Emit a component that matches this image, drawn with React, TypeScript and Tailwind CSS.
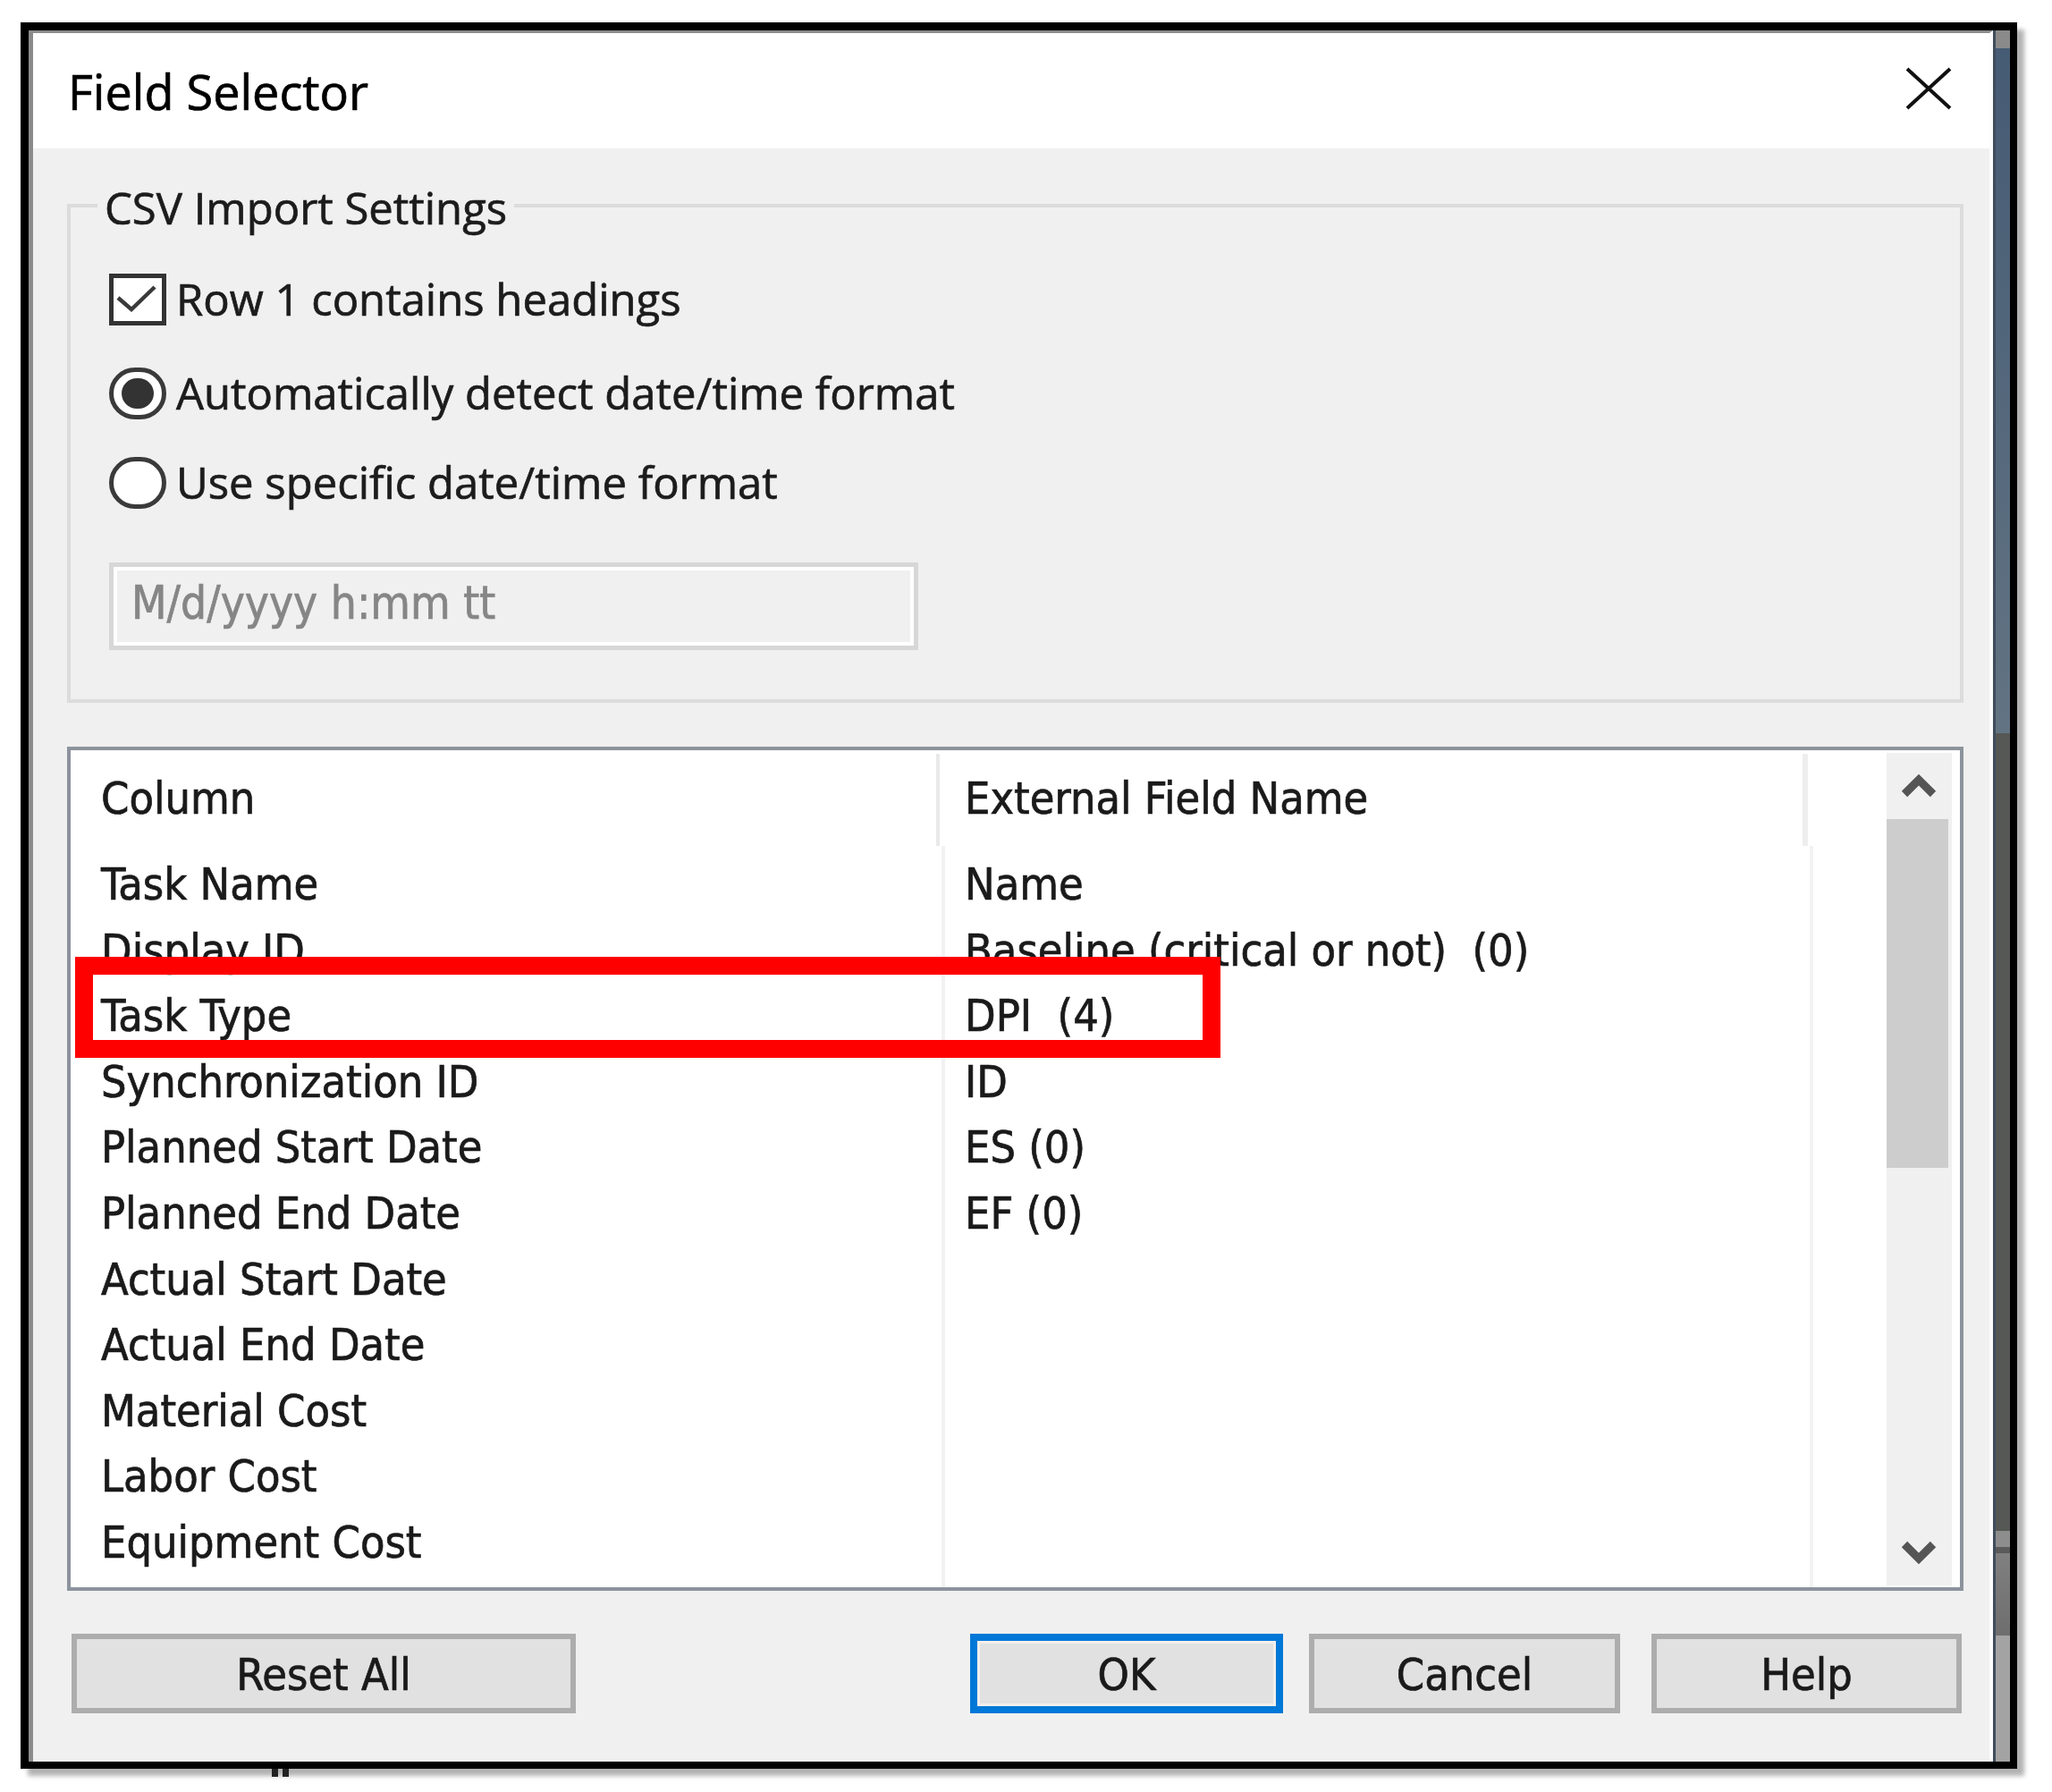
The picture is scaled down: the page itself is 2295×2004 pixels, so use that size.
const ui = "font-['Open_Sans','Noto_Sans',sans-serif] [-webkit-text-stroke:0.7px_currentcolor]";
const tahoma =
  "font-['DejaVu_Sans_Condensed','DejaVu_Sans',sans-serif] font-stretch-condensed [-webkit-text-stroke:0.7px_currentcolor]";

const rows: [string, string][] = [
  ['Task Name', 'Name'],
  ['Display ID', 'Baseline (critical or not)  (0)'],
  ['Task Type', 'DPI  (4)'],
  ['Synchronization ID', 'ID'],
  ['Planned Start Date', 'ES (0)'],
  ['Planned End Date', 'EF (0)'],
  ['Actual Start Date', ''],
  ['Actual End Date', ''],
  ['Material Cost', ''],
  ['Labor Cost', ''],
  ['Equipment Cost', ''],
  ['', ''],
];

const TitleBar = () => (
  <div className="flex h-[129px] shrink-0 items-center justify-between bg-white pr-[42px] pl-[39px]">
    <span className={`${ui} text-[54px] leading-none text-black`}>Field Selector</span>
    <svg width="52" height="48" viewBox="0 0 52 48" className="mb-[6px]">
      <path d="M2 2 L50 46 M50 2 L2 46" stroke="#111" strokeWidth="4" fill="none" />
    </svg>
  </div>
);

const Checkbox = () => (
  <div className="h-[58px] w-[64px] shrink-0 border-[5px] border-[#333] bg-white">
    <svg width="54" height="48" viewBox="0 0 54 48">
      <path d="M5 22 L20 35 L46 10" stroke="#3a3a3a" strokeWidth="4.5" fill="none" />
    </svg>
  </div>
);

const Radio = ({ checked }: { checked?: boolean }) => (
  <div className="flex h-[58px] w-[64px] shrink-0 items-center justify-center rounded-full border-[5px] border-[#3a3a3a] bg-white">
    {checked && <div className="h-[34px] w-[36px] rounded-full bg-[#333]" />}
  </div>
);

const Option = ({ control, label, className }: { control: React.ReactNode; label: string; className: string }) => (
  <div className={`flex h-[64px] items-center gap-[11px] pl-[43px] ${className}`}>
    {control}
    <span className={`${ui} text-[49px] whitespace-pre text-[#1c1c1c]`}>{label}</span>
  </div>
);

const ImportSettings = () => (
  <div className="flex h-[558px] shrink-0 flex-col border-4 border-[#dcdcdc]">
    <span className={`${ui} -mt-[30px] ml-[30px] h-[60px] self-start bg-[#f0f0f0] px-[8px] text-[49px] leading-[60px] text-[#1c1c1c]`}>
      CSV Import Settings
    </span>
    <Option className="mt-[41px]" control={<Checkbox />} label="Row 1 contains headings" />
    <Option className="mt-[41px]" control={<Radio checked />} label="Automatically detect date/time format" />
    <Option className="mt-[36px]" control={<Radio />} label="Use specific date/time format" />
    <div className="mt-[57px] ml-[43px] h-[98px] w-[905px] border-[5px] border-[#d7d7d7]">
      <div className="flex h-full items-center border-4 border-white bg-[#f0f0f0] pb-[6px] pl-[16px]">
        <span className={`${tahoma} text-[51px] text-[#868686]`}>M/d/yyyy h:mm tt</span>
      </div>
    </div>
  </div>
);

const Chevron = ({ down }: { down?: boolean }) => (
  <svg width="40" height="32" viewBox="0 0 40 32">
    <path
      d={down ? 'M4 7 L20 23 L36 7' : 'M4 25 L20 9 L36 25'}
      stroke="#555"
      strokeWidth="9"
      fill="none"
    />
  </svg>
);

const FieldList = () => (
  <div className="relative mt-[49px] flex h-[944px] shrink-0 border-4 border-[#8c939c] bg-white">
    <div className={`${tahoma} flex w-[2031px] flex-col overflow-hidden text-[50px] text-[#1a1a1a]`}>
      <div className="flex h-[107px] shrink-0">
        <div className="flex w-[968px] items-center pt-[2px] pl-[34px]">Column</div>
        <div className="mt-[4px] w-[4px] bg-[#e9e9e9]" />
        <div className="flex w-[965px] items-center pt-[2px] pl-[28px]">External Field Name</div>
        <div className="mt-[4px] w-[6px] bg-[#eeeeee]" />
      </div>
      {rows.map(([column, field], i) => (
        <div key={i} className="flex h-[73.6px] shrink-0 flex-col">
          <div className="flex flex-1">
            <div className="flex w-[974px] items-center pt-[6px] pl-[34px] whitespace-pre">{column}</div>
            <div className="w-[4px] bg-[#f2f2f2]" />
            <div className="flex w-[967px] items-center pt-[6px] pl-[22px] whitespace-pre">{field}</div>
            <div className="w-[4px] bg-[#f2f2f2]" />
          </div>
          <div className="mx-[5px] h-[4px] bg-[#f0f0f0]" />
        </div>
      ))}
    </div>

    <div className="mt-[3px] mb-[2px] flex w-[73px] flex-col bg-[#f0f0f0]">
      <div className="flex h-[74px] items-center justify-center pr-[2px]">
        <Chevron />
      </div>
      <div className="mr-[4px] h-[390px] bg-[#cdcdcd]" />
      <div className="flex-1" />
      <div className="flex h-[74px] items-center justify-center pr-[2px]">
        <Chevron down />
      </div>
    </div>

    {/* annotation drawn over the list */}
    <div className="absolute top-[231px] left-[5px] h-[113px] w-[1281px] border-[20px] border-[#ff0000]" />
  </div>
);

const Btn = ({ label, className }: { label: string; className: string }) => (
  <div className={`${tahoma} flex h-full items-center justify-center bg-[#e1e1e1] pt-[4px] text-[50px] text-[#1a1a1a] ${className}`}>
    {label}
  </div>
);

const Buttons = () => (
  <div className="mt-[48px] flex h-[89px] shrink-0 pr-[2px] pl-[5px]">
    <Btn label="Reset All" className="w-[564px] border-[6px] border-[#adadad]" />
    <Btn label="OK" className="ml-auto w-[350px] border-[8px] border-[#0078d7] shadow-[inset_0_0_0_3px_#f3efeb]" />
    <Btn label="Cancel" className="ml-[29px] w-[348px] border-[6px] border-[#adadad]" />
    <Btn label="Help" className="ml-[35px] w-[347px] border-[6px] border-[#adadad]" />
  </div>
);

const Strip = () => (
  <div className="flex w-[19px] flex-col border-l-[3px] border-l-[#3f4c5c]">
    <div className="h-[20px] bg-[#8a8a8a]" />
    <div className="h-[766px] bg-linear-to-b from-[#465b74] to-[#627483]" />
    <div className="h-[892px] bg-[#555855]" />
    <div className="h-[18px] bg-[#8d8d8d]" />
    <div className="h-[7px] bg-[#5a5a5a]" />
    <div className="h-[92px] bg-linear-to-b from-[#808080] to-[#6e6e6e]" />
    <div className="flex-1 bg-[#a3a3a3]" />
  </div>
);

export default function App() {
  return (
    <div className="h-[2004px] w-[2295px] overflow-hidden bg-white pt-[25px] pl-[23px]">
      <div className="flex h-[1953px] w-[2233px] border-[9px] border-r-[8px] border-b-[8px] border-black shadow-[8px_8px_5px_rgba(0,0,0,0.3)]">
        <div className="flex w-[2197px] flex-col border-t-[3px] border-r-[4px] border-l-[5px] border-t-[#8c8c8c] border-r-[#fbfbfb] border-l-[#8c8c8c]">
          <TitleBar />
          <div className="flex flex-1 flex-col bg-[#f0f0f0] pt-[62px] pr-[29px] pl-[38px]">
            <ImportSettings />
            <FieldList />
            <Buttons />
          </div>
        </div>
        <Strip />
      </div>
      <div className="ml-[281px] flex gap-[5px]">
        <div className="h-[9px] w-[7px] bg-[#222]" />
        <div className="h-[9px] w-[7px] bg-[#222]" />
      </div>
    </div>
  );
}
